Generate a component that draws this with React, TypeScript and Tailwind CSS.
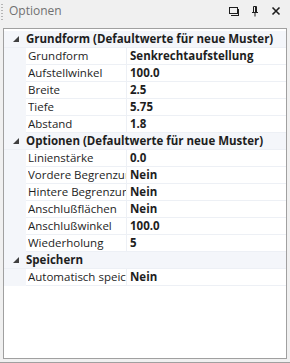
import React from "react";

type Row = { label: string; value: string };
type Section = { title: string; rows: Row[] };

const sections: Section[] = [
  {
    title: "Grundform (Defaultwerte für neue Muster)",
    rows: [
      { label: "Grundform", value: "Senkrechtaufstellung" },
      { label: "Aufstellwinkel", value: "100.0" },
      { label: "Breite", value: "2.5" },
      { label: "Tiefe", value: "5.75" },
      { label: "Abstand", value: "1.8" },
    ],
  },
  {
    title: "Optionen (Defaultwerte für neue Muster)",
    rows: [
      { label: "Linienstärke", value: "0.0" },
      { label: "Vordere Begrenzung", value: "Nein" },
      { label: "Hintere Begrenzung", value: "Nein" },
      { label: "Anschlußflächen", value: "Nein" },
      { label: "Anschlußwinkel", value: "100.0" },
      { label: "Wiederholung", value: "5" },
    ],
  },
  {
    title: "Speichern",
    rows: [{ label: "Automatisch speichern", value: "Nein" }],
  },
];

function Triangle() {
  return (
    <svg width="6" height="6" viewBox="0 0 6 6" className="block">
      <path d="M6 0 L6 6 L0 6 Z" fill="#404040" />
    </svg>
  );
}

export default function App() {
  return (
    <div className="w-[290px] h-[363px] bg-[#f0f0f0] font-['Open_Sans','Noto_Sans',sans-serif] text-[11.5px] text-[#1e1e1e] overflow-hidden">
      {/* title bar */}
      <div className="h-[28px] flex items-center relative">
        <div className="absolute left-[1px] top-[4px] h-[16px] w-[2px] bg-[repeating-linear-gradient(to_bottom,#b5b5b5_0_1px,transparent_1px_3px)]" />
        <span className="ml-[9px] mt-[-6px] text-[#717171] text-[12px]">Optionen</span>
        <div className="ml-auto mr-[8px] mt-[-6px] flex items-center gap-[9px]">
          <svg width="12" height="12" viewBox="0 0 12 12">
            <rect x="1.5" y="2.5" width="8" height="6" fill="none" stroke="#1e1e1e" />
            <path d="M3 10.5 H11" stroke="#1e1e1e" />
            <path d="M10.5 4 V10.5" stroke="#1e1e1e" />
          </svg>
          <svg width="12" height="12" viewBox="0 0 12 12">
            <path d="M4.5 1.5 V7.5 M7.5 1.5 V7.5 M3 7.5 H9 M6 7.5 V11.5 M4.5 1.5 H7.5" stroke="#1e1e1e" fill="none" />
            <path d="M6.5 2 V7" stroke="#1e1e1e" />
          </svg>
          <svg width="12" height="12" viewBox="0 0 12 12">
            <path d="M2.5 2.5 L9.5 9.5 M9.5 2.5 L2.5 9.5" stroke="#1e1e1e" strokeWidth="1.6" />
          </svg>
        </div>
      </div>

      {/* property grid */}
      <div className="mx-[3px] h-[331px] border border-[#a0a0a0] bg-white pt-[2px]">
        {sections.map((s) => (
          <div key={s.title}>
            <div className="h-[17px] flex items-center bg-[#f4f6fa] border-b border-[#edf0f5]">
              <div className="w-[22px] flex justify-center pl-[2px]">
                <Triangle />
              </div>
              <span className="font-bold whitespace-nowrap">{s.title}</span>
            </div>
            {s.rows.map((r) => (
              <div key={r.label} className="h-[17px] flex">
                <div className="w-[22px] bg-[#f4f6fa]" />
                <div className="w-[101px] pl-[2px] border-r border-b border-[#edf0f5] flex items-center overflow-hidden whitespace-nowrap">
                  <span className="block w-[98px] overflow-hidden">{r.label}</span>
                </div>
                <div className="flex-1 pl-[3px] border-b border-[#edf0f5] flex items-center font-bold whitespace-nowrap">
                  {r.value}
                </div>
              </div>
            ))}
          </div>
        ))}
      </div>
      <div className="mt-[3px] h-[1px] bg-[#a0a0a0]" />
    </div>
  );
}
